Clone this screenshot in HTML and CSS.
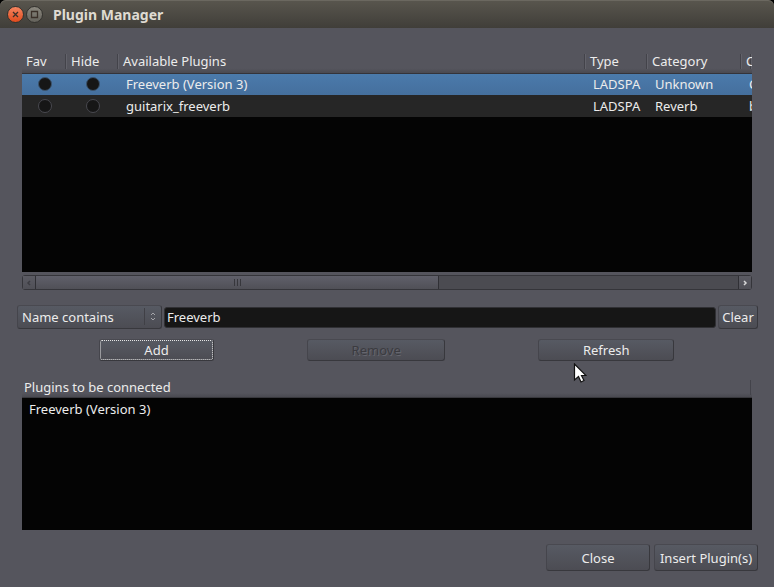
FILE: index.html
```html
<!DOCTYPE html>
<html lang="en">
<head>
<meta charset="utf-8">
<title>Plugin Manager</title>
<link rel="stylesheet" href="styles.css">
</head>
<body>
<header class="titlebar">
  <button class="win-btn win-close" aria-label="Close window">
    <svg viewBox="0 0 15 15"><path d="M5 5l5 5M10 5l-5 5"/></svg>
  </button>
  <button class="win-btn win-max" aria-label="Maximize window">
    <svg viewBox="0 0 15 15"><path d="M4.500 4.500h6v6h-6z"/></svg>
  </button>
  <h1>Plugin Manager</h1>
</header>
<main class="dialog">
  <div class="panel available">
    <table class="plugins">
      <colgroup><col class="c-fav"><col class="c-hide"><col><col class="c-type"><col class="c-cat"><col class="c-last"></colgroup>
      <thead>
        <tr><th>Fav</th><th>Hide</th><th>Available Plugins</th><th>Type</th><th>Category</th><th>C</th></tr>
      </thead>
      <tbody>
        <tr class="selected">
          <td class="tick"><input type="checkbox" aria-label="Favourite Freeverb"></td>
          <td class="tick"><input type="checkbox" aria-label="Hide Freeverb"></td>
          <td>Freeverb (Version 3)</td><td>LADSPA</td><td>Unknown</td><td>C</td>
        </tr>
        <tr>
          <td class="tick"><input type="checkbox" aria-label="Favourite guitarix_freeverb"></td>
          <td class="tick"><input type="checkbox" aria-label="Hide guitarix_freeverb"></td>
          <td>guitarix_freeverb</td><td>LADSPA</td><td>Reverb</td><td>b</td>
        </tr>
      </tbody>
    </table>
  </div>
  <div class="scrollbar">
    <button class="arrow arrow-left" aria-label="Scroll left" disabled><svg viewBox="0 0 12 12"><path d="M7 4L5 6l2 2"/></svg></button>
    <div class="track"><div class="thumb"><i></i><i></i><i></i></div></div>
    <button class="arrow arrow-right" aria-label="Scroll right"><svg viewBox="0 0 12 12"><path d="M5 4l2 2-2 2"/></svg></button>
  </div>
  <div class="filter">
    <div class="combo">
      <select aria-label="Filter type"><option>Name contains</option></select>
      <svg viewBox="0 0 8 10"><path d="M2 3.500l2-2 2 2M2 6.500l2 2 2-2"/></svg>
    </div>
    <input class="query" type="text" value="Freeverb" aria-label="Filter text">
    <button class="btn clear">Clear</button>
  </div>
  <div class="actions">
    <button class="btn add">Add</button>
    <button class="btn remove" disabled>Remove</button>
    <button class="btn refresh">Refresh</button>
  </div>
  <div class="panel chosen">
    <h2>Plugins to be connected</h2>
    <ul><li>Freeverb (Version 3)</li></ul>
  </div>
  <footer class="footer">
    <button class="btn">Close</button>
    <button class="btn">Insert Plugin(s)</button>
  </footer>
</main>
<svg class="pointer" viewBox="0 0 14 21"><path d="M1.500 1v16l4-3.500 2.500 5.500 3-1.500-2.500-5H13z"/></svg>
</body>
</html>
```
FILE: styles.css
```css
* { box-sizing: border-box; }
html { background: #000; }
body {
  margin: 0;
  height: 100vh;
  display: flex;
  flex-direction: column;
  overflow: hidden;
  font: 13px/16px "Noto Sans", "Open Sans", sans-serif;
  color: #ececec;
  background: #000;
}
button, input, select { font: inherit; color: inherit; margin: 0; }

.titlebar {
  flex: none;
  height: 28px;
  display: flex;
  align-items: center;
  gap: 2px;
  padding: 0 7px;
  border-radius: 6px 6px 0 0;
  background: linear-gradient(#59564e, #403e39);
  box-shadow: inset 0 1px #6b6860;
}
.titlebar h1 { margin: 0 0 0 8px; font-size: 14px; line-height: 18px; padding-top: 2px; font-weight: 700; color: #dfdbd2; }
.win-btn { width: 17px; height: 17px; padding: 0; border: 1px solid #33322e; border-radius: 50%; }
.win-btn svg { display: block; width: 15px; height: 15px; fill: none; stroke: #3b3029; stroke-width: 1.300; }
.win-close { background: linear-gradient(#f58560, #e04b1d); }
.win-max { background: linear-gradient(#8b887f, #64625b); }

.dialog {
  flex: 1;
  min-height: 0;
  display: flex;
  flex-direction: column;
  padding: 22px 16px 16px 17px;
  background: #55555d;
}
.panel { margin: 0 6px 0 5px; background: #040404; overflow: hidden; min-height: 0; }
.available { flex: 222 1 0; }
.chosen { flex: 153 1 0; margin-top: 16px; }

.plugins { width: 100%; table-layout: fixed; border-collapse: collapse; }
.c-fav { width: 45px; }
.c-hide { width: 52px; }
.c-type { width: 62px; }
.c-cat { width: 94px; }
.c-last { width: 10px; }
.plugins th, .plugins td {
  height: 22px;
  padding: 0 0 0 8px;
  text-align: left;
  font-weight: 400;
  white-space: nowrap;
  overflow: hidden;
}
.plugins th {
  height: 23px;
  padding-left: 4px;
  border-bottom: 1px solid #34343a;
  background: linear-gradient(#62626a, #62626a) right 4px / 1px 15px no-repeat,
    linear-gradient(#43434a, #43434a) right 1px top 4px / 1px 15px no-repeat, linear-gradient(#55555d 80%, #4a4a51);
}
.plugins td { padding-left: 7px; }
.plugins tr { background: #262626; }
.plugins .selected { background: linear-gradient(#4b7bac, #456f9d); }
.plugins .tick { padding: 0; text-align: center; }
.tick input {
  appearance: none;
  display: block;
  width: 14px;
  height: 14px;
  margin: 0 auto;
  border: 1px solid #48484f;
  border-radius: 50%;
  background: #161616;
}
.selected input { border-color: #3c536c; }

.scrollbar {
  flex: none;
  height: 15px;
  display: flex;
  margin: 3px 6px 0 5px;
  border: 1px solid #35353a;
  border-radius: 3px;
  background: #4b4b51;
}
.arrow { width: 12px; padding: 0; border: 0; background: linear-gradient(#5b5b63, #505057); }
.arrow svg { display: block; width: 12px; height: 12px; fill: none; stroke: #d8d8d8; stroke-width: 1.500; }
.arrow-left svg { stroke: #3c3c42; }
.arrow-right { width: 13px; border-left: 1px solid #303035; }
.track { flex: 1; }
.thumb {
  width: 57.500%;
  height: 100%;
  display: flex;
  align-items: center;
  justify-content: center;
  gap: 2px;
  border: solid #303035;
  border-width: 0 1px;
  background: linear-gradient(#60606a, #505057);
}
.thumb i { width: 1px; height: 7px; background: #37373c; }

.btn, .combo select {
  border: 1px solid #38383d;
  border-top-color: #494950;
  border-left-color: #45454c;
  border-radius: 3px;
  background: linear-gradient(#575a63, #4c4c53);
}
.btn { padding: 0 3px; text-align: center; white-space: nowrap; }

.filter { flex: none; display: flex; align-items: center; gap: 2px; height: 24px; margin-top: 15px; }
.combo { position: relative; width: 145px; height: 24px; }
.combo select { appearance: none; width: 100%; height: 100%; padding: 0 4px; }
.combo svg {
  position: absolute;
  right: 1px;
  top: 3px;
  width: 17px;
  height: 17px;
  padding: 3px 4px;
  border-left: 1px solid #404046;
  fill: none;
  stroke: #a5a5aa;
}
.query { flex: 1; min-width: 0; height: 21px; padding: 0 2px; border: 1px solid #303034; border-radius: 3px; background: #161616; }
.clear { width: 40px; height: 24px; }

.actions { flex: none; display: flex; gap: 93px; height: 22px; margin: 10px 84px 0 82px; }
.add { flex: 114 1 0; outline: 1px dotted #e4e4e4; outline-offset: -2px; }
.remove { flex: 139 1 0; }
.refresh { flex: 136 1 0; }
.btn:disabled { color: #3b3b40; text-shadow: 1px 1px #66666e; }

.chosen h2 {
  margin: 0;
  height: 21px;
  padding: 2px;
  font-size: 13px;
  line-height: 16px;
  font-weight: 400;
  border-bottom: 1px solid #38383d;
  background: linear-gradient(#43434a, #43434a) right 1px top 3px / 1px 15px no-repeat, linear-gradient(#55555d 80%, #4a4a51);
}
.chosen ul { list-style: none; margin: 0; padding: 3px 7px; }

.footer { flex: none; display: flex; justify-content: flex-end; gap: 4px; margin-top: 14px; }
.footer .btn { width: 104px; height: 27px; }

.pointer {
  position: absolute;
  left: 573px;
  top: 363px;
  width: 14px;
  height: 21px;
  fill: #fff;
  stroke: #111;
  stroke-width: 1.200;
  pointer-events: none;
}
```
